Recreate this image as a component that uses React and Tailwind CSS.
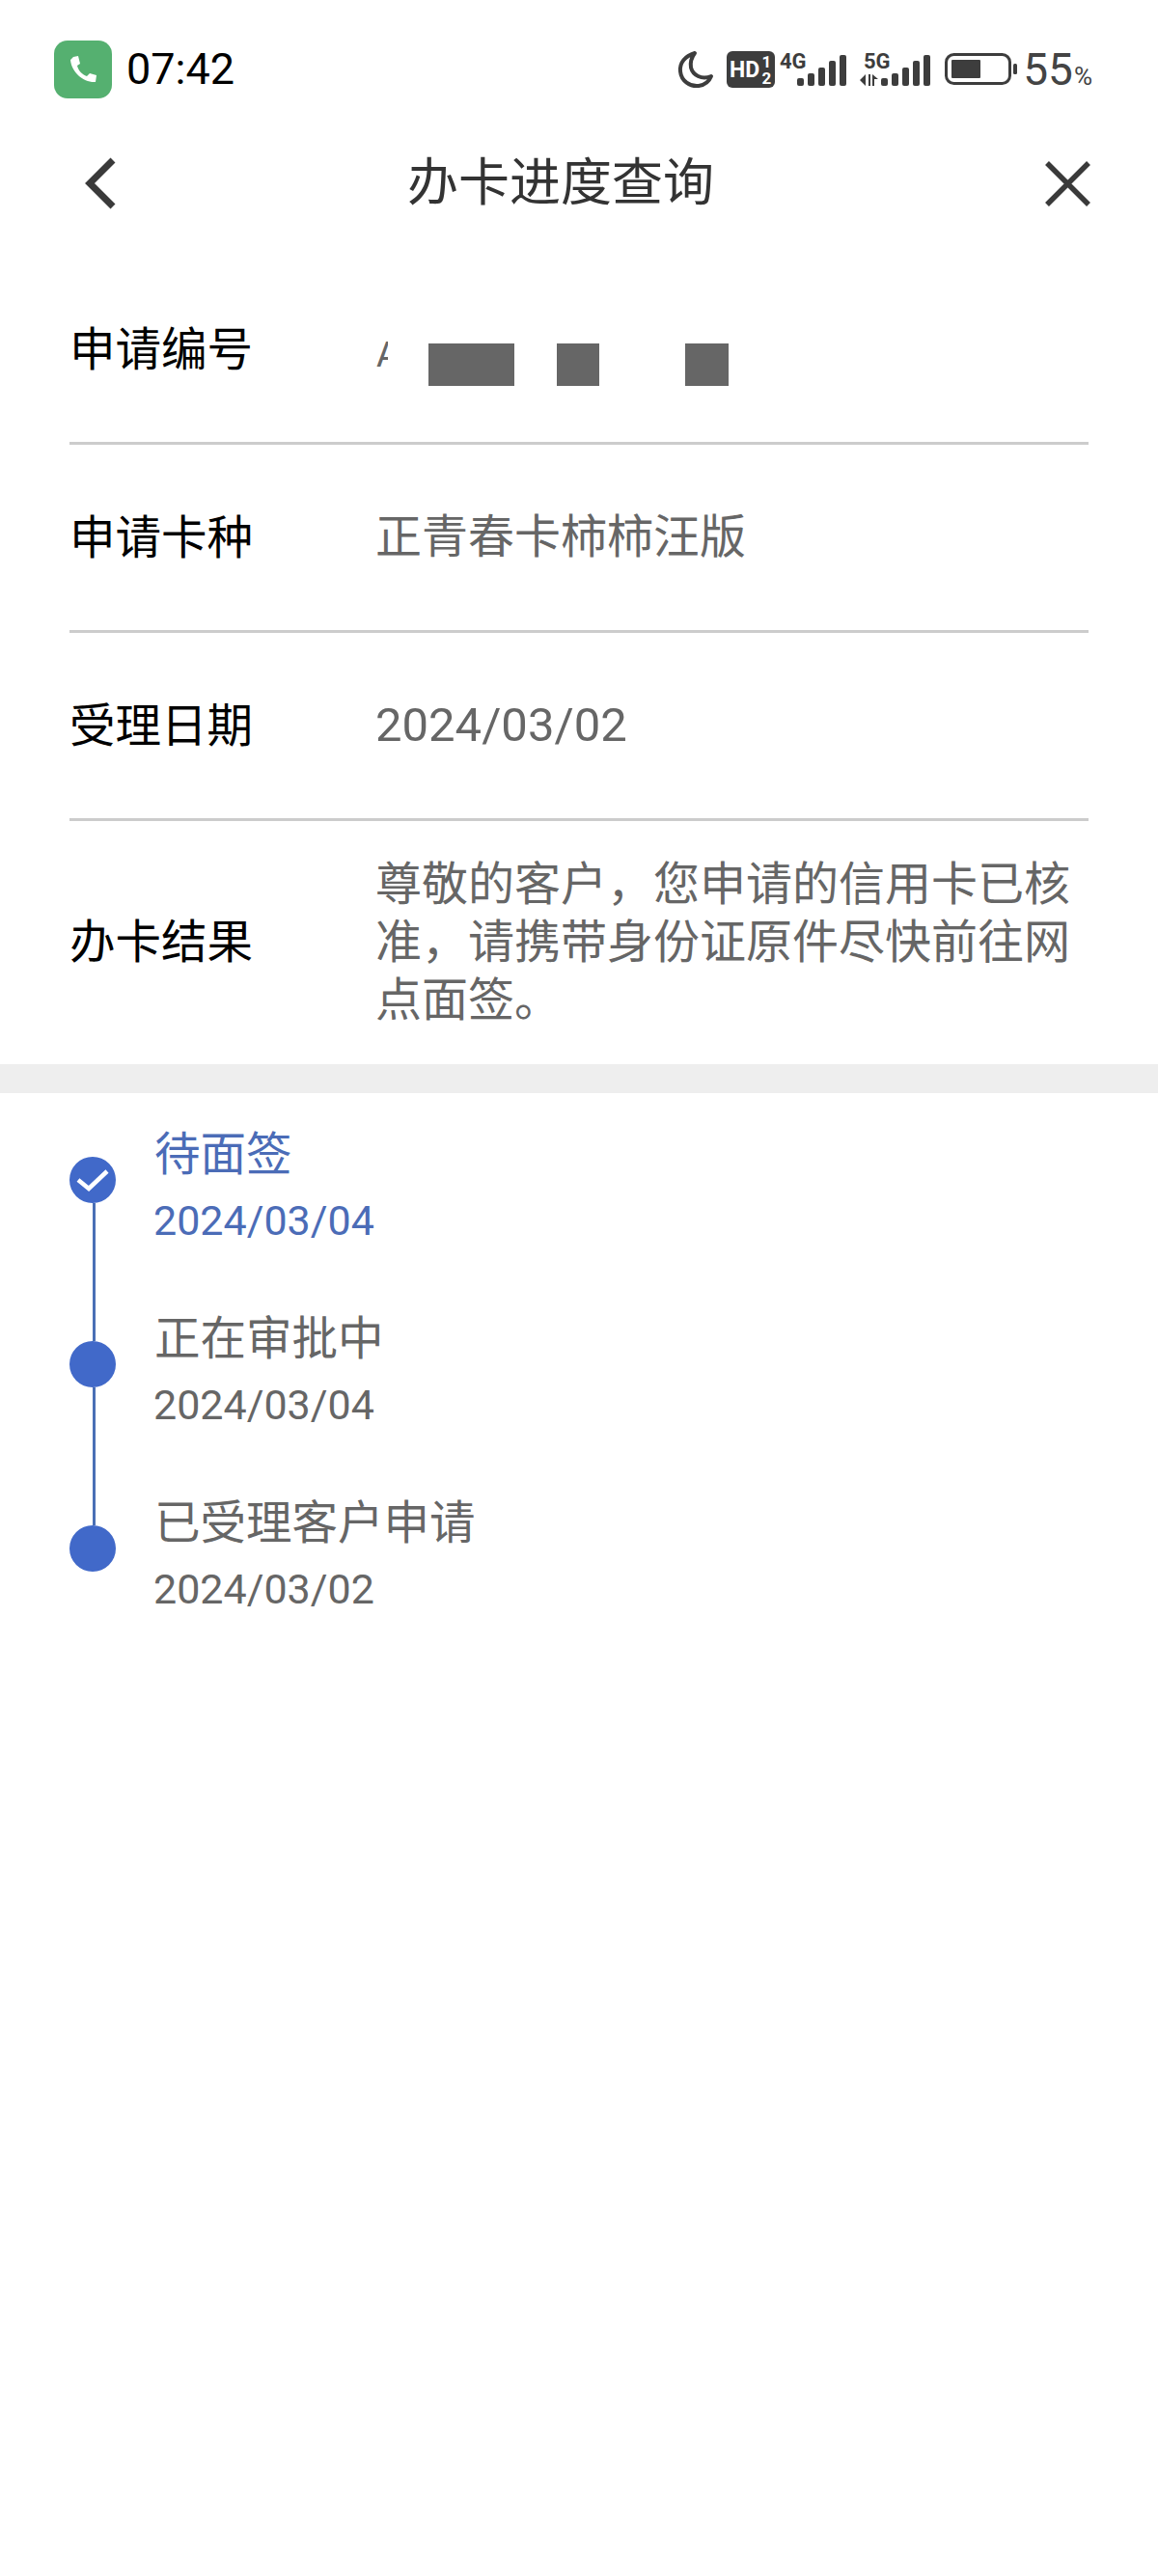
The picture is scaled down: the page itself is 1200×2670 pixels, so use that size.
const CJK = "font-['Roboto','Noto_Sans_CJK_SC',sans-serif]";

function Bars({ x = 0, h = [8, 13, 19, 26, 32] }) {
  return h.map((v, i) => (
    <rect key={i} x={x + i * 11} y={36 - v} width="7" height={v} rx="2" fill="#3d3d3d" />
  ));
}

function StatusIcons() {
  return (
    <div className="flex items-center">
      <svg width="38" height="40" viewBox="0 0 38 40">
        <path d="M18 3 C8 6 2 13 3 22 C4 32 13 38 22 37 C29 36 33 32 35 27 C25 31 16 26 14 18 C13 12 15 7 18 3 Z" fill="none" stroke="#3d3d3d" strokeWidth="4" strokeLinejoin="round" />
      </svg>
      <svg className="ml-[13px]" width="50" height="38" viewBox="0 0 50 38">
        <rect width="50" height="38" rx="6" fill="#3d3d3d" />
        <text x="3" y="27" fontFamily="Roboto" fontWeight="700" fontSize="23" fill="#fff">HD</text>
        <text x="36.5" y="17" fontFamily="Roboto" fontWeight="700" fontSize="17" fill="#fff">1</text>
        <text x="36.5" y="34" fontFamily="Roboto" fontWeight="700" fontSize="17" fill="#fff">2</text>
      </svg>
      <svg className="ml-[5px] overflow-visible" width="70" height="38" viewBox="0 0 70 38">
        <text x="0" y="18" fontFamily="Roboto" fontWeight="700" fontSize="22" fill="#3d3d3d">4G</text>
        <Bars x={18} />
      </svg>
      <svg className="ml-[13px] overflow-visible" width="74" height="38" viewBox="0 0 74 38">
        <text x="4" y="18" fontFamily="Roboto" fontWeight="700" fontSize="22" fill="#3d3d3d">5G</text>
        <path d="M6 24 L6 36 L0 30 Z M9 24 L9 36 L11 36 L11 24 Z M13 24 L13 36 L15 36 L15 29 L19 29 Z" fill="#3d3d3d" />
        <Bars x={22} />
      </svg>
      <svg className="ml-[14px]" width="76" height="34" viewBox="0 0 76 34">
        <rect x="1.5" y="1.5" width="66" height="30" rx="8" fill="none" stroke="#3d3d3d" strokeWidth="3" />
        <rect x="7" y="7" width="30" height="19" rx="1" fill="#3d3d3d" />
        <rect x="71" y="11" width="4" height="11" rx="1.5" fill="#3d3d3d" />
      </svg>
      <span className="ml-[5px] text-[46px] leading-[46px] text-[#444444]">55</span>
      <span className="ml-[1px] text-[26px] leading-[26px] mt-[14px] text-[#444444]">%</span>
    </div>
  );
}

const rows = [
  { label: "申请编号", id: true },
  { label: "申请卡种", value: "正青春卡柿柿汪版" },
  { label: "受理日期", value: "2024/03/02" },
];

const steps = [
  { title: "待面签", date: "2024/03/04", active: true },
  { title: "正在审批中", date: "2024/03/04" },
  { title: "已受理客户申请", date: "2024/03/02", last: true },
];

export default function App() {
  return (
    <div className={`w-[1200px] h-[2670px] bg-white ${CJK}`}>
      <div className="flex h-[120px] pt-[42px] pl-[56px] pr-[68px] items-start justify-between">
        <div className="flex items-center">
          <div className="w-[60px] h-[60px] rounded-[14px] bg-[#55b070] flex items-center justify-center">
            <svg width="30" height="30" viewBox="0 0 30 30">
              <path d="M5 2 L10 1 L12 9 L9 11 C10 16 14 20 19 22 L22 19 L29 21 L28 28 C16 29 3 18 2 5 Z" fill="#fff" />
            </svg>
          </div>
          <span className="ml-[15px] text-[45px] leading-[60px] text-black">07:42</span>
        </div>
        <div className="h-[60px] flex items-center">
          <StatusIcons />
        </div>
      </div>

      <div className="flex h-[140px] items-center">
        <svg className="ml-[88px]" width="32" height="54" viewBox="0 0 32 54">
          <path d="M29 3 L5 27 L29 51" fill="none" stroke="#3a3a3a" strokeWidth="7" />
        </svg>
        <div className="ml-[302px] text-[53px] leading-[60px] text-[#333333]">办卡进度查询</div>
        <svg className="ml-auto mr-[70px]" width="47" height="47" viewBox="0 0 47 47">
          <path d="M2 2 L45 45 M45 2 L2 45" fill="none" stroke="#3a3a3a" strokeWidth="5.5" />
        </svg>
      </div>

      <div className="pt-[6px]">
        {rows.map((r) => (
          <div key={r.label} className="mx-[72px] h-[195px] border-b-[3px] border-[#cccccc] flex items-center">
            <div className="w-[317px] pt-[2px] text-[47.5px] leading-[60px] text-black">{r.label}</div>
            {r.id ? (
              <div className="flex items-start mt-[31px] ml-[1px]">
                <span className="w-[12px] h-[27px] -mt-[2px] overflow-hidden text-[38px] leading-[27px] text-[#666666]">A</span>
                <span className="ml-[42px] w-[89px] h-[44px] bg-[#666666]" />
                <span className="ml-[44px] w-[44px] h-[44px] bg-[#666666]" />
                <span className="ml-[89px] w-[45px] h-[44px] bg-[#666666]" />
              </div>
            ) : (
              <div className={`leading-[60px] text-[#666666] ${r.value.startsWith("2") ? "text-[49px]" : "text-[48px]"}`}>{r.value}</div>
            )}
          </div>
        ))}
        <div className="mx-[72px] h-[252px] flex items-center">
          <div className="w-[317px] text-[47.5px] leading-[60px] text-black">办卡结果</div>
          <div className="flex-1 text-[48px] leading-[60px] text-[#666666]">
            尊敬的客户，您申请的信用卡已核准，请携带身份证原件尽快前往网点面签。
          </div>
        </div>
      </div>

      <div className="h-[30px] bg-[#eeeeee]" />

      <div>
        {steps.map((s, i) => (
          <div key={s.title} className="flex h-[191px] pl-[72px]">
            <div className="w-[48px] flex flex-col items-center">
              <div className={`h-[66px] w-[3px] ml-[3px] ${i > 0 ? "bg-[#4a6fb5]" : ""}`} />
              <div className="w-[48px] h-[48px] rounded-full bg-[#4169c9] flex items-center justify-center shrink-0">
                {s.active && (
                  <svg width="34" height="26" viewBox="0 0 34 26">
                    <path d="M2 13 L13 22 L32 4" fill="none" stroke="#fff" strokeWidth="4.5" />
                  </svg>
                )}
              </div>
              <div className={`flex-1 w-[3px] ml-[3px] ${s.last ? "" : "bg-[#4a6fb5]"}`} />
            </div>
            <div className="ml-[40px] pt-[34px]">
              <div className={`text-[47.5px] leading-[60px] ${s.active ? "text-[#4b6cb7]" : "text-[#666666]"}`}>{s.title}</div>
              <div className={`mt-[8px] -ml-[1px] text-[43px] leading-[60px] ${s.active ? "text-[#4b6cb7]" : "text-[#666666]"}`}>{s.date}</div>
            </div>
          </div>
        ))}
      </div>
    </div>
  );
}
